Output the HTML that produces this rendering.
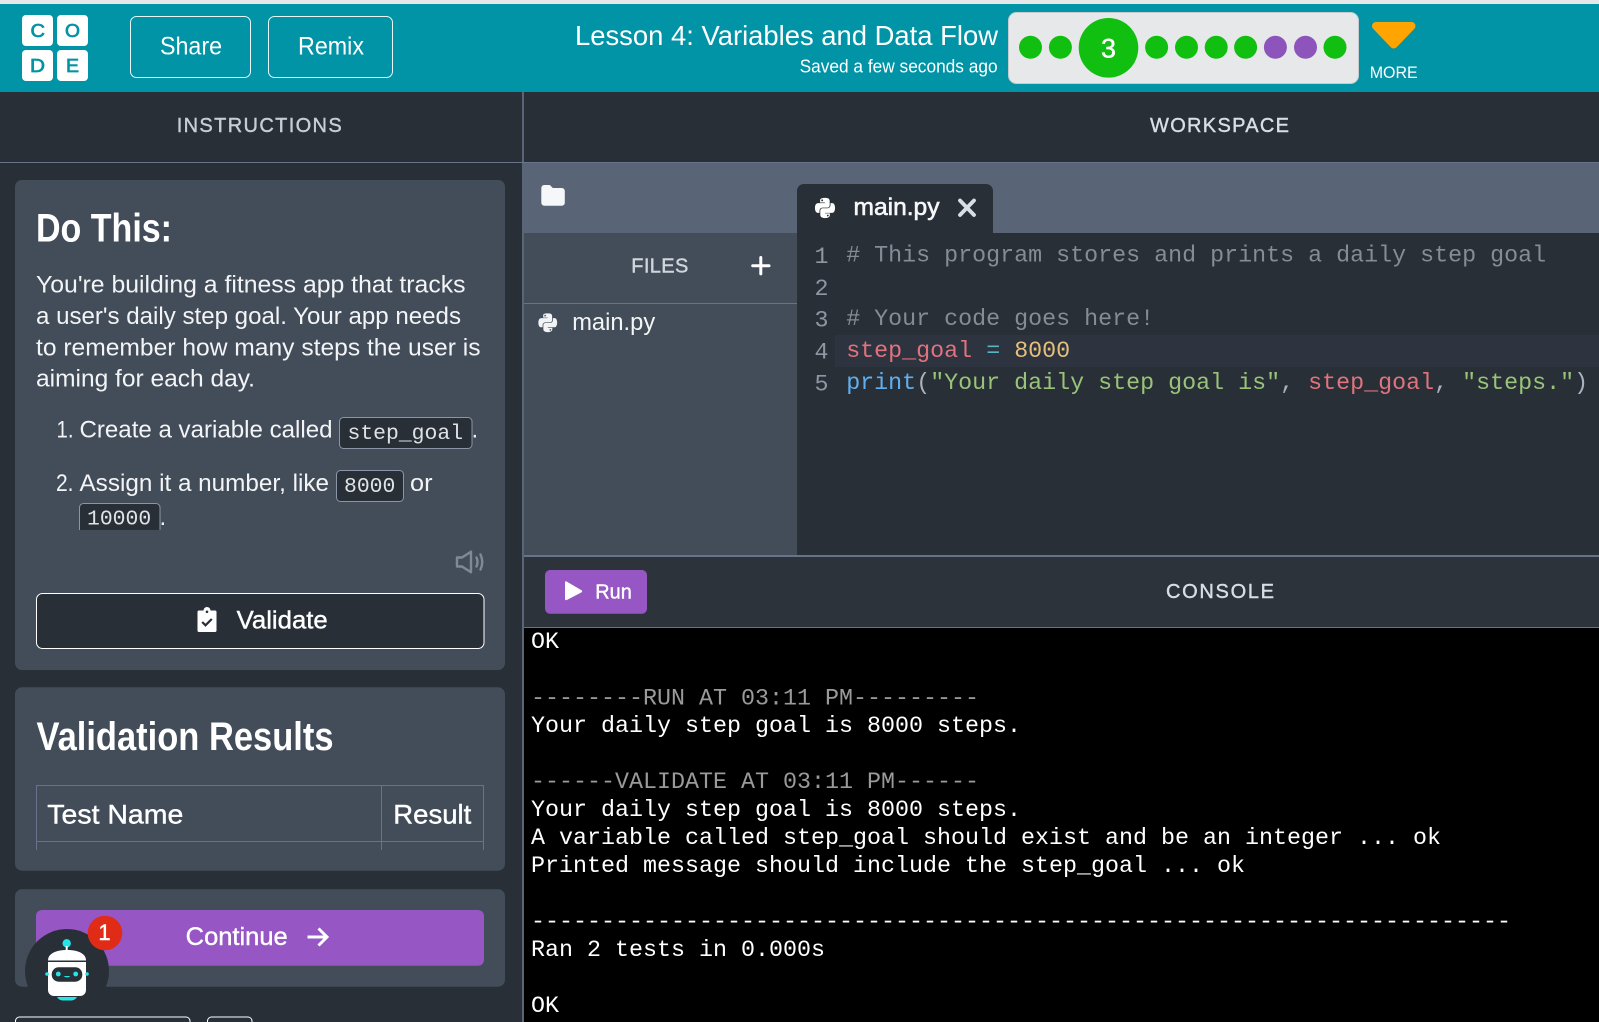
<!DOCTYPE html>
<html lang="en"><head><meta charset="utf-8"><title>Lesson 4: Variables and Data Flow</title>
<style>
html,body{margin:0;padding:0;background:#292f37;width:1599px;height:1022px;overflow:hidden}
svg{display:block}
text{font-family:"Liberation Sans",sans-serif;white-space:pre}
.m{font-family:"Liberation Mono",monospace}
.med{stroke:currentColor;stroke-width:.4}
</style></head><body>
<svg xmlns="http://www.w3.org/2000/svg" width="1599" height="1022" viewBox="0 0 1599 1022">
<defs>
<clipPath id="c1"><rect x="0" y="400" width="520" height="130"/></clipPath>
<path id="py" d="M439.8 200.5c-7.7-30.9-22.3-54.2-53.4-54.2h-40.1v47.4c0 36.8-31.2 67.8-66.8 67.8H172.7c-29.2 0-53.4 25-53.4 54.3v101.8c0 29 25.2 46 53.4 54.3 33.8 9.9 66.3 11.7 106.8 0 26.9-7.8 53.4-23.5 53.4-54.3v-40.7H226.2v-13.6h160.2c31.1 0 42.6-21.7 53.4-54.2 11.2-33.5 10.7-65.7 0-108.6zM286.2 404c11.1 0 20.1 9.1 20.1 20.3 0 11.3-9 20.4-20.1 20.4-11 0-20.1-9.2-20.1-20.4.1-11.3 9.1-20.3 20.1-20.3zM167.8 248.1h106.8c29.7 0 53.4-24.5 53.4-54.3V91.9c0-29-24.4-50.7-53.4-55.6-35.8-5.9-74.7-5.6-106.8.1-45.2 8-53.4 24.7-53.4 55.6v40.7h106.9v13.6h-147c-31.1 0-58.3 18.7-66.8 54.2-9.8 40.7-10.2 66.1 0 108.6 7.6 31.6 25.7 54.2 56.8 54.2H101v-48.8c0-35.3 30.5-66.4 66.8-66.4zm-6.7-142.6c-11.1 0-20.1-9.1-20.1-20.3.1-11.3 9-20.4 20.1-20.4 11 0 20.1 9.2 20.1 20.4s-9 20.3-20.1 20.3z"/>
</defs>
<!-- page -->
<rect width="1599" height="1022" fill="#292f37"/>
<rect width="1599" height="4" fill="#e6e7e7"/>
<!-- header -->
<rect y="4" width="1599" height="88" fill="#0094a6"/>
<g fill="#fff">
<rect x="22" y="15" width="31" height="31" rx="4"/><rect x="57" y="15" width="31" height="31" rx="4"/>
<rect x="22" y="50" width="31" height="31" rx="4"/><rect x="57" y="50" width="31" height="31" rx="4"/>
</g>
<g fill="#0094a6" font-size="18" stroke="#0094a6" stroke-width=".7">
<text x="30.5" y="37" textLength="14.5" lengthAdjust="spacingAndGlyphs">C</text>
<text x="65" y="37" textLength="15" lengthAdjust="spacingAndGlyphs">O</text>
<text x="30" y="72" textLength="15" lengthAdjust="spacingAndGlyphs">D</text>
<text x="66" y="72" textLength="13" lengthAdjust="spacingAndGlyphs">E</text>
</g>
<rect x="130.5" y="16.5" width="120" height="61" rx="6" fill="none" stroke="#e8f6f7"/>
<rect x="268.5" y="16.5" width="124" height="61" rx="6" fill="none" stroke="#e8f6f7"/>
<g fill="#fff">
<text x="160" y="54.5" font-size="25" textLength="62" lengthAdjust="spacingAndGlyphs">Share</text>
<text x="298" y="54.5" font-size="25" textLength="66" lengthAdjust="spacingAndGlyphs">Remix</text>
<text x="575" y="45" font-size="28" textLength="423" lengthAdjust="spacingAndGlyphs">Lesson 4: Variables and Data Flow</text>
<text x="799.6" y="72.7" font-size="18" textLength="198" lengthAdjust="spacingAndGlyphs">Saved a few seconds ago</text>
</g>
<rect x="1008.5" y="12.5" width="350" height="71" rx="8" fill="#e7e8ea" stroke="#c9cccf"/>
<g fill="#10bf10">
<circle cx="1030.5" cy="47.3" r="11.5"/><circle cx="1060.4" cy="47.3" r="11.5"/>
<circle cx="1108.5" cy="47.8" r="29.8"/>
<circle cx="1156.6" cy="47.3" r="11.5"/><circle cx="1186.5" cy="47.3" r="11.5"/><circle cx="1216.2" cy="47.3" r="11.5"/><circle cx="1245.6" cy="47.3" r="11.5"/>
<circle cx="1335" cy="47.3" r="11.5"/>
</g>
<g fill="#8d55bb"><circle cx="1275.4" cy="47.3" r="11.5"/><circle cx="1305.5" cy="47.3" r="11.5"/></g>
<text x="1108.5" y="57.5" font-size="27" fill="#fff" text-anchor="middle" class="med" color="#fff">3</text>
<polygon points="1376,26 1411.5,26 1393.7,44.5" fill="#ffa400" stroke="#ffa400" stroke-width="8" stroke-linejoin="round"/>
<text x="1369.7" y="78" font-size="17" fill="#fff" textLength="48" lengthAdjust="spacingAndGlyphs">MORE</text>

<!-- panel titles -->
<rect x="522" y="92" width="2" height="930" fill="#5a6678"/>
<rect y="162" width="1599" height="1" fill="#66738a"/>
<text x="176.7" y="132" font-size="20" fill="#c8ced8" class="med" color="#c8ced8" textLength="165" lengthAdjust="spacing">INSTRUCTIONS</text>
<text x="1150" y="132" font-size="20" fill="#d9dee5" class="med" color="#d9dee5" textLength="139" lengthAdjust="spacing">WORKSPACE</text>

<!-- card 1 -->
<rect x="15" y="180" width="490" height="490" rx="7" fill="#434d5a"/>
<text x="36" y="241.7" font-size="40" font-weight="700" fill="#fff" textLength="136" lengthAdjust="spacingAndGlyphs">Do This:</text>
<g fill="#f3f4f6" font-size="24">
<text x="36" y="292.7" textLength="429.5" lengthAdjust="spacingAndGlyphs">You're building a fitness app that tracks</text>
<text x="36" y="324" textLength="425" lengthAdjust="spacingAndGlyphs">a user's daily step goal. Your app needs</text>
<text x="36" y="355.7" textLength="444.5" lengthAdjust="spacingAndGlyphs">to remember how many steps the user is</text>
<text x="36" y="386.7" textLength="219" lengthAdjust="spacingAndGlyphs">aiming for each day.</text>
<text x="56.5" y="437.7" textLength="17" lengthAdjust="spacingAndGlyphs">1.</text>
<text x="79.5" y="437.7" textLength="253" lengthAdjust="spacingAndGlyphs">Create a variable called</text>
<text x="471.5" y="437.7">.</text>
<text x="56" y="491" textLength="17.5" lengthAdjust="spacingAndGlyphs">2.</text>
<text x="79.5" y="491" textLength="249.5" lengthAdjust="spacingAndGlyphs">Assign it a number, like</text>
<text x="410" y="491" textLength="22.5" lengthAdjust="spacingAndGlyphs">or</text>
<text x="159.5" y="525" font-size="24">.</text>
</g>
<rect x="339.5" y="417.5" width="132.5" height="31" rx="4" fill="#292f37" stroke="#8a96a8"/>
<text class="m" x="347.5" y="439" font-size="21.4" fill="#dfe2e6">step_goal</text>
<rect x="336.5" y="470.5" width="67" height="31" rx="4" fill="#292f37" stroke="#8a96a8"/>
<text class="m" x="344" y="492" font-size="21.4" fill="#dfe2e6">8000</text>
<g clip-path="url(#c1)">
<rect x="79.5" y="503.500" width="80.5" height="40" rx="4" fill="#292f37" stroke="#8a96a8"/>
<text class="m" x="87" y="524.5" font-size="21.4" fill="#dfe2e6">10000</text>
</g>
<!-- speaker -->
<g fill="none" stroke="#7f8a99" stroke-width="2.4" stroke-linejoin="round" stroke-linecap="round">
<path d="M457 557.5h5l9-5.800v20.600l-9-5.800h-5z"/>
<path d="M476.5 557.5q2 4.500 0 9"/>
<path d="M480.5 554.5q3.500 7.500 0 15"/>
</g>
<!-- validate -->
<rect x="36.5" y="593.5" width="447.5" height="55" rx="6" fill="#292f37" stroke="#fff"/>
<path d="M199 610.500h4.500a3.500 3.500 0 0 1 7 0H215a1.500 1.500 0 0 1 1.500 1.500v18.500a1.500 1.500 0 0 1-1.500 1.500H199a1.500 1.500 0 0 1-1.500-1.500V612a1.500 1.500 0 0 1 1.500-1.500z" fill="#fff"/>
<circle cx="207" cy="611.8" r="1.3" fill="#292f37"/>
<path d="M202.2 622l3.300 3.300 6.300-6.300" fill="none" stroke="#292f37" stroke-width="2.2"/>
<text x="236.7" y="628.3" font-size="25" fill="#fff" class="med" color="#fff" textLength="91" lengthAdjust="spacingAndGlyphs">Validate</text>

<!-- card 2 -->
<rect x="15" y="687.3" width="490" height="183.4" rx="7" fill="#434d5a"/>
<text x="36.5" y="750" font-size="40" font-weight="700" fill="#fff" textLength="297" lengthAdjust="spacingAndGlyphs">Validation Results</text>
<g stroke="#66738a" fill="none">
<path d="M36.5 850V785.500H483.500V850"/>
<path d="M36.5 841.500H483.500"/>
<path d="M381.5 785.500V850"/>
</g>
<text x="47.3" y="823.3" font-size="27" fill="#fff" class="med" color="#fff" textLength="136" lengthAdjust="spacingAndGlyphs">Test Name</text>
<text x="393.3" y="823.3" font-size="27" fill="#fff" class="med" color="#fff" textLength="78" lengthAdjust="spacingAndGlyphs">Result</text>

<!-- card 3 -->
<rect x="15" y="889.3" width="490" height="97.4" rx="7" fill="#434d5a"/>
<rect x="36" y="910" width="448" height="55.7" rx="6" fill="#9656c4"/>
<text x="185.7" y="944.8" font-size="25" fill="#fff" class="med" color="#fff" textLength="102" lengthAdjust="spacingAndGlyphs">Continue</text>
<path d="M307.5 937H326.5M318.500 928.500l8.500 8.500-8.500 8.500" fill="none" stroke="#fff" stroke-width="3"/>

<!-- bottom buttons -->
<path d="M15.5 1022v-1a4 4 0 0 1 4-4H186a4 4 0 0 1 4 4v1" fill="#292f37" stroke="#fff"/>
<path d="M207.5 1022v-1a4 4 0 0 1 4-4H248a4 4 0 0 1 4 4v1" fill="#292f37" stroke="#fff"/>

<!-- robot -->
<circle cx="67" cy="971" r="42" fill="#292f37"/>
<circle cx="105" cy="933" r="17.3" fill="#e02c17"/>
<text x="104.5" y="940" font-size="22" fill="#fff" text-anchor="middle" class="med" color="#fff">1</text>
<circle cx="66.7" cy="943.3" r="4.200" fill="#25e6e6"/>
<rect x="65.7" y="946" width="2" height="5" fill="#fff"/>
<path d="M48 960.500c0-7 8-10.500 19-10.500s19 3.500 19 10.500z" fill="#fff"/>
<path d="M48 962h38v28a6 6 0 0 1-6 6H54a6 6 0 0 1-6-6z" fill="#fff"/>
<rect x="51.7" y="967.3" width="30.6" height="14.4" rx="7" fill="#292f37"/>
<g fill="#25e6e6">
<circle cx="58.3" cy="974" r="2.400"/><circle cx="75.7" cy="974" r="2.400"/>
<circle cx="47" cy="974" r="1.8"/><circle cx="87" cy="974" r="1.8"/>
<path d="M63.500 976h7q-3.500 3-7 0z"/>
<path d="M57 997h20q-2 3.500-6 3.500h-8q-4 0-6-3.500z"/>
</g>

<!-- workspace: tab bar -->
<rect x="524" y="163" width="1075" height="70" fill="#596576"/>
<path d="M541.3 188a3 3 0 0 1 3-3h5.500l3 3h9a3 3 0 0 1 3 3v11.700a3 3 0 0 1-3 3h-17.500a3 3 0 0 1-3-3z" fill="#f6f7f8"/>
<!-- file panel -->
<rect x="524" y="233" width="273" height="322" fill="#434d5a"/>
<rect x="524" y="303" width="273" height="1" fill="#66738a"/>
<text x="631.3" y="272.7" font-size="20" fill="#d1d6dc" class="med" color="#d1d6dc" textLength="57" lengthAdjust="spacing">FILES</text>
<path d="M752.700 265.700H769M760.800 257.500v16.400" stroke="#fff" stroke-width="3" stroke-linecap="round" fill="none"/>
<svg x="537" y="312" width="21.500" height="21.500" viewBox="0 0 448 512" preserveAspectRatio="xMidYMid meet" fill="#f2f3f5"><use href="#py"/></svg>
<text x="572.2" y="330" font-size="24" fill="#f3f4f6" textLength="83" lengthAdjust="spacingAndGlyphs">main.py</text>
<!-- editor -->
<rect x="797" y="233" width="802" height="322" fill="#292f37"/>
<path d="M797 233v-42a7 7 0 0 1 7-7H986a7 7 0 0 1 7 7v42z" fill="#292f37"/>
<svg x="814" y="196.5" width="22" height="23" viewBox="0 0 448 512" preserveAspectRatio="xMidYMid meet" fill="#fff"><use href="#py"/></svg>
<text x="853.5" y="215" font-size="24" fill="#f6f7f8" stroke="#f6f7f8" stroke-width=".6" textLength="86" lengthAdjust="spacingAndGlyphs">main.py</text>
<path d="M960 200.500l14 14.500M974 200.500l-14 14.500" stroke="#d9dee5" stroke-width="3.8" stroke-linecap="round" fill="none"/>
<rect x="834.7" y="335" width="764.3" height="32" fill="#2d333f"/>
<g font-size="23.33" fill="#8f97a3">
<text class="m" x="814.5" y="263">1</text>
<text class="m" x="814.5" y="295">2</text>
<text class="m" x="814.5" y="326.5">3</text>
<text class="m" x="814.5" y="358.5">4</text>
<text class="m" x="814.5" y="390.3">5</text>
</g>
<g font-size="23.33">
<text class="m" x="846.2" y="261.7" fill="#868c96"># This program stores and prints a daily step goal</text>
<text class="m" x="846.2" y="325" fill="#868c96"># Your code goes here!</text>
<text class="m" x="846.2" y="356.8" fill="#e0737d">step_goal <tspan fill="#56b6c2">=</tspan> <tspan fill="#e5c07b">8000</tspan></text>
<text class="m" x="846.2" y="389" fill="#abb2bf"><tspan fill="#61afef">print</tspan>(<tspan fill="#98c379">"Your daily step goal is"</tspan>, <tspan fill="#e0737d">step_goal</tspan>, <tspan fill="#98c379">"steps."</tspan>)</text>
</g>

<!-- console -->
<rect x="524" y="557" width="1075" height="70" fill="#2c333b"/>
<rect x="524" y="555" width="1075" height="2" fill="#66738a"/>
<rect x="524" y="627" width="1075" height="1" fill="#66738a"/>
<rect x="545" y="570" width="102" height="43.7" rx="5" fill="#9656c4"/>
<path d="M565 582.500v16.500q0 1.800 1.800 1l14.500-7.500q1.700-1.200 0-2.400l-14.500-8.500q-1.800-1-1.800.9z" fill="#fff"/>
<text x="595.3" y="598.3" font-size="20.5" fill="#fff" class="med" color="#fff" textLength="36.500" lengthAdjust="spacingAndGlyphs">Run</text>
<text x="1166" y="598" font-size="20" fill="#d9dee5" class="med" color="#d9dee5" textLength="108" lengthAdjust="spacing">CONSOLE</text>
<rect x="524" y="628" width="1075" height="394" fill="#000"/>
<g font-size="23.33" fill="#fff">
<text class="m" x="531" y="648">OK</text>
<text class="m" x="531" y="704.3" fill="#9a9a9a">--------RUN AT 03:11 PM---------</text>
<text class="m" x="531" y="732">Your daily step goal is 8000 steps.</text>
<text class="m" x="531" y="788.2" fill="#9a9a9a">------VALIDATE AT 03:11 PM------</text>
<text class="m" x="531" y="816">Your daily step goal is 8000 steps.</text>
<text class="m" x="531" y="844">A variable called step_goal should exist and be an integer ... ok</text>
<text class="m" x="531" y="872">Printed message should include the step_goal ... ok</text>
<text class="m" x="531" y="928">----------------------------------------------------------------------</text>
<text class="m" x="531" y="956">Ran 2 tests in 0.000s</text>
<text class="m" x="531" y="1012">OK</text>
</g>
</svg>
</body></html>
